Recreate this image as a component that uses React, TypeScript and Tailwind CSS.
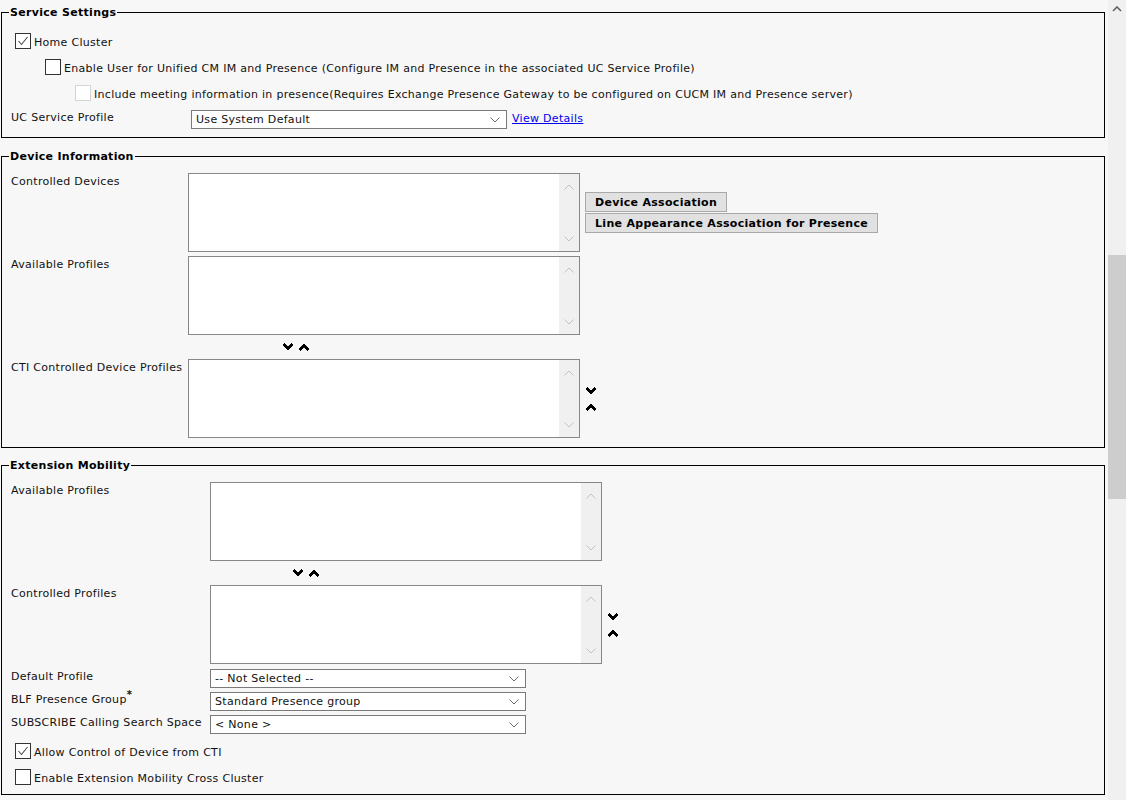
import React from 'react';

const Check = () => (
  <svg viewBox="0 0 14 14" className="h-[14px] w-[14px]">
    <polyline points="2.5,7 5.5,10.5 11.5,3" fill="none" stroke="#4a4a4a" strokeWidth="1.1" />
  </svg>
);

const Checkbox = ({ checked = false, disabled = false }: { checked?: boolean; disabled?: boolean }) => (
  <span
    className={`inline-flex h-4 w-4 shrink-0 items-center justify-center border bg-white ${
      disabled ? 'border-[#d4d4d4]' : 'border-[#333333]'
    }`}
  >
    {checked && <Check />}
  </span>
);

const CheckRow = ({
  label,
  checked,
  disabled,
  indent,
  className,
}: {
  label: string;
  checked?: boolean;
  disabled?: boolean;
  indent: string;
  className?: string;
}) => (
  <div className={`flex items-end ${indent} ${className ?? ''}`}>
    <Checkbox checked={checked} disabled={disabled} />
    <span className="ml-[3px] leading-[13px]">{label}</span>
  </div>
);

const ThinChevron = ({ up, color }: { up?: boolean; color: string }) => (
  <svg viewBox="0 0 10 6" className="h-[6px] w-[10px]">
    <polyline
      points={up ? '0.5,5.5 5,1 9.5,5.5' : '0.5,0.5 5,5 9.5,0.5'}
      fill="none"
      stroke={color}
      strokeWidth="1"
    />
  </svg>
);

const Select = ({ value }: { value: string }) => (
  <div className="flex h-[19px] w-[316px] items-center justify-between border border-[#7a7a7a] bg-white pl-[4px] pr-[6px]">
    <span className="leading-[13px]">{value}</span>
    <ThinChevron color="#6b6b6b" />
  </div>
);

const Listbox = () => (
  <div className="flex h-[79px] w-[392px] shrink-0 border border-[#86868b] bg-white">
    <div className="flex-1" />
    <div className="flex w-[20px] flex-col items-center justify-between bg-[#f0f0f0] pb-[9px] pt-[10px]">
      <ThinChevron up color="#c2c2c2" />
      <ThinChevron color="#c2c2c2" />
    </div>
  </div>
);

const BoldChevron = ({ up }: { up?: boolean }) => (
  <svg viewBox="0 0 12 8" className="h-[8px] w-[12px]" shapeRendering="crispEdges">
    <polyline
      points={up ? '1.2,7 6,2.2 10.8,7' : '1.2,1 6,5.8 10.8,1'}
      fill="none"
      stroke="#000"
      strokeWidth="2.8"
    />
  </svg>
);

const MoveRow = ({ offset }: { offset: string }) => (
  <div className={`flex h-[24px] items-start gap-[4px] pt-[8px] ${offset}`}>
    <BoldChevron />
    <BoldChevron up />
  </div>
);

const StackedMove = () => (
  <div className="ml-[5px] flex flex-col gap-[8px] self-center">
    <BoldChevron />
    <BoldChevron up />
  </div>
);

const Fieldset = ({ title, className, children }: { title: string; className?: string; children: React.ReactNode }) => (
  <fieldset className={`ml-[1px] w-[1104px] border border-black ${className ?? ''}`}>
    <legend className="ml-[7px] px-[1px] font-bold leading-[13px] text-black">{title}</legend>
    {children}
  </fieldset>
);

const AssocButton = ({ label }: { label: string }) => (
  <button className="h-[20px] border border-[#a9a9a9] bg-[#e1e1e1] px-[9px] text-left font-bold leading-[13px] tracking-[0.3px] text-black">
    {label}
  </button>
);

export default function App() {
  return (
    <div className="flex h-[800px] w-[1126px] overflow-hidden bg-[#f7f7f7] font-['DejaVu_Sans',Verdana,sans-serif] text-[11px] tracking-[0.3px] text-[#111]">
      <div className="w-[1108px] pt-[6px]">
        <Fieldset title="Service Settings" className="pb-[8px]">
          <div className="pl-[9px]">
            <CheckRow label="Home Cluster" checked indent="ml-[4px]" className="mt-[14px]" />
            <CheckRow
              label="Enable User for Unified CM IM and Presence (Configure IM and Presence in the associated UC Service Profile)"
              indent="ml-[34px]"
              className="mt-[10px]"
            />
            <CheckRow
              label="Include meeting information in presence(Requires Exchange Presence Gateway to be configured on CUCM IM and Presence server)"
              disabled
              indent="ml-[64px]"
              className="mt-[10px]"
            />
            <div className="mt-[9px] flex items-start">
              <span className="w-[180px] pt-[1px] leading-[13px]">UC Service Profile</span>
              <Select value="Use System Default" />
              <a className="ml-[5px] pt-[2px] leading-[13px] text-[#0000ee] underline">View Details</a>
            </div>
          </div>
        </Fieldset>

        <Fieldset title="Device Information" className="mt-[12px] pb-[9px]">
          <div className="pl-[9px] pt-[10px]">
            <div className="flex">
              <span className="w-[177px] pt-[2px] leading-[13px]">Controlled Devices</span>
              <Listbox />
              <div className="ml-[5px] flex flex-col items-start gap-[1px] self-center">
                <AssocButton label="Device Association" />
                <AssocButton label="Line Appearance Association for Presence" />
              </div>
            </div>
            <div className="mt-[4px] flex">
              <span className="w-[177px] pt-[2px] leading-[13px]">Available Profiles</span>
              <Listbox />
            </div>
            <MoveRow offset="pl-[271px]" />
            <div className="flex">
              <span className="w-[177px] pt-[2px] leading-[13px]">CTI Controlled Device Profiles</span>
              <Listbox />
              <StackedMove />
            </div>
          </div>
        </Fieldset>

        <Fieldset title="Extension Mobility" className="mt-[11px] pb-[9px]">
          <div className="pl-[9px] pt-[10px]">
            <div className="flex">
              <span className="w-[199px] pt-[2px] leading-[13px]">Available Profiles</span>
              <Listbox />
            </div>
            <MoveRow offset="pl-[281px]" />
            <div className="flex">
              <span className="w-[199px] pt-[2px] leading-[13px]">Controlled Profiles</span>
              <Listbox />
              <StackedMove />
            </div>
            <div className="mt-[5px] flex items-start">
              <span className="w-[199px] pt-[1px] leading-[13px]">Default Profile</span>
              <Select value="-- Not Selected --" />
            </div>
            <div className="mt-[4px] flex items-start">
              <span className="w-[199px] pt-[1px] leading-[13px]">
                BLF Presence Group<sup className="text-[10px] font-bold">*</sup>
              </span>
              <Select value="Standard Presence group" />
            </div>
            <div className="mt-[4px] flex items-start">
              <span className="w-[199px] pt-[1px] leading-[13px]">SUBSCRIBE Calling Search Space</span>
              <Select value="< None >" />
            </div>
            <CheckRow label="Allow Control of Device from CTI" checked indent="ml-[4px]" className="mt-[9px]" />
            <CheckRow label="Enable Extension Mobility Cross Cluster" indent="ml-[4px]" className="mt-[10px]" />
          </div>
        </Fieldset>
      </div>

      <div className="flex w-[18px] flex-col bg-[#f0f0f0]">
        <div className="flex h-[17px] items-center justify-center">
          <svg viewBox="0 0 10 6" className="h-[6px] w-[10px]">
            <polyline points="1,5 5,1 9,5" fill="none" stroke="#606060" strokeWidth="1.6" />
          </svg>
        </div>
        <div className="mt-[238px] h-[244px] bg-[#cdcdcd]" />
      </div>
    </div>
  );
}
